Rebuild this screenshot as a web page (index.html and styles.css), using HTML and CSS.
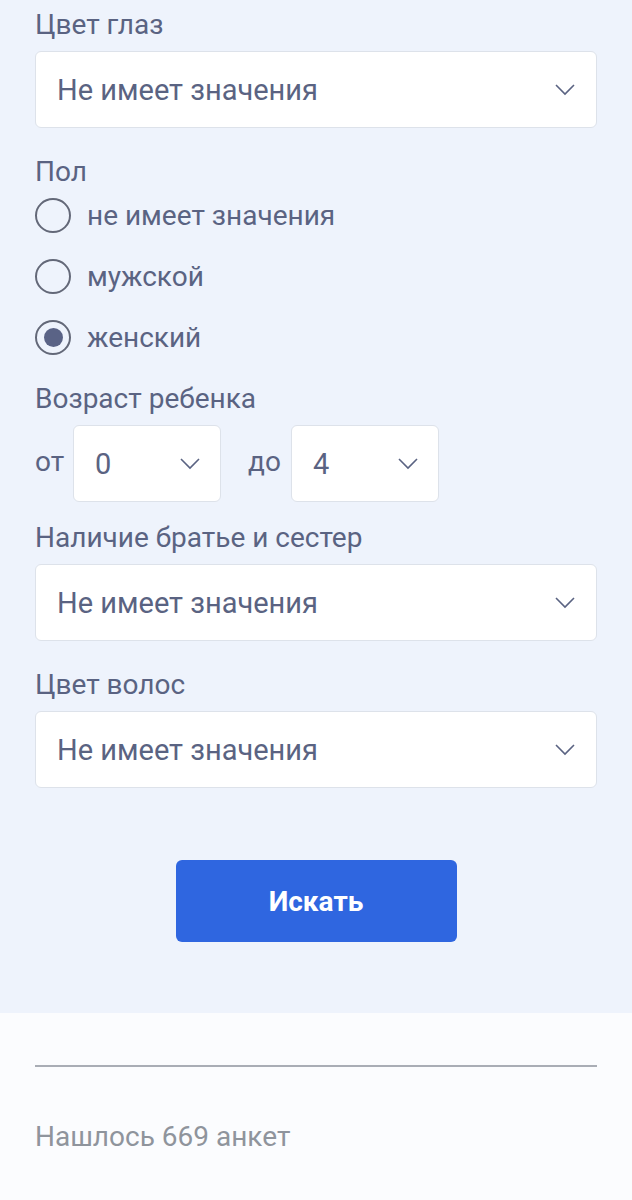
FILE: index.html
```html
<!DOCTYPE html>
<html lang="ru">
<head>
    <meta charset="UTF-8">
    <meta name="viewport" content="width=device-width, initial-scale=1.0">
    <title>Поиск анкет</title>
    <link rel="stylesheet" href="styles.css">
</head>
<body>
    <form class="filters">
        <div class="field">
            <div class="label">Цвет глаз</div>
            <div class="select">
                <span>Не имеет значения</span>
                <svg class="chevron" viewBox="0 0 20 12"><path d="M1 1l9 9 9-9"/></svg>
            </div>
        </div>

        <div class="field">
            <div class="label">Пол</div>
            <div class="radios">
                <label class="radio"><span class="circle"></span>не имеет значения</label>
                <label class="radio"><span class="circle"></span>мужской</label>
                <label class="radio checked"><span class="circle"></span>женский</label>
            </div>
        </div>

        <div class="field age">
            <div class="label">Возраст ребенка</div>
            <div class="range">
                <span class="range-word">от</span>
                <div class="select small">
                    <span>0</span>
                    <svg class="chevron" viewBox="0 0 20 12"><path d="M1 1l9 9 9-9"/></svg>
                </div>
                <span class="range-word to">до</span>
                <div class="select small">
                    <span>4</span>
                    <svg class="chevron" viewBox="0 0 20 12"><path d="M1 1l9 9 9-9"/></svg>
                </div>
            </div>
        </div>

        <div class="field">
            <div class="label">Наличие братье и сестер</div>
            <div class="select">
                <span>Не имеет значения</span>
                <svg class="chevron" viewBox="0 0 20 12"><path d="M1 1l9 9 9-9"/></svg>
            </div>
        </div>

        <div class="field">
            <div class="label">Цвет волос</div>
            <div class="select">
                <span>Не имеет значения</span>
                <svg class="chevron" viewBox="0 0 20 12"><path d="M1 1l9 9 9-9"/></svg>
            </div>
        </div>

        <div class="actions">
            <button type="button" class="search-btn">Искать</button>
        </div>
    </form>

    <div class="results">
        <hr class="divider">
        <p class="count">Нашлось 669 анкет</p>
    </div>
</body>
</html>
```

FILE: styles.css
```css
body {
    margin: 0;
    font-family: Roboto, "Noto Sans", sans-serif;
    color: #5a6382;
    background-color: #fbfcfe;
}

.filters {
    display: flex;
    flex-direction: column;
    background-color: #eef3fc;
    padding: 11px 35px 71px;
}

.field {
    margin-bottom: 30px;
}

.field.age {
    margin-bottom: 22px;
}

.label {
    font-size: 28px;
    line-height: 28px;
    margin-bottom: 12px;
}

.select {
    display: flex;
    align-items: center;
    justify-content: space-between;
    height: 77px;
    box-sizing: border-box;
    padding: 0 21px 0 21px;
    background-color: #fff;
    border: 1.5px solid #dde2ea;
    border-radius: 6px;
    font-size: 29px;
}

.chevron {
    width: 20px;
    height: 12px;
    fill: none;
    stroke: #5a6382;
    stroke-width: 1.6;
}

.radios {
    display: flex;
    flex-direction: column;
    gap: 26px;
    margin-top: 2px;
}

.radio {
    display: flex;
    align-items: center;
    gap: 16px;
    font-size: 28px;
    height: 35px;
}

.circle {
    width: 36px;
    height: 35px;
    box-sizing: border-box;
    border: 2px solid #636878;
    border-radius: 50%;
    display: flex;
    align-items: center;
    justify-content: center;
}

.radio.checked .circle::after {
    content: '';
    width: 19px;
    height: 19px;
    border-radius: 50%;
    background-color: #5a6386;
}

.range {
    display: flex;
    align-items: center;
}

.range-word {
    font-size: 28px;
    width: 38px;
    margin-top: -4px;
}

.range-word.to {
    width: 43px;
    margin-left: 27px;
}

.select.small {
    width: 148px;
    padding: 0 20px 0 21px;
}

.actions {
    display: flex;
    justify-content: center;
    margin-top: 42px;
}

.search-btn {
    width: 281px;
    height: 82px;
    border: none;
    border-radius: 6px;
    background-color: #2f66e0;
    color: #fff;
    font-family: inherit;
    font-size: 28px;
    font-weight: 700;
}

.results {
    padding: 52px 35px 40px;
}

.divider {
    margin: 0;
    border: none;
    border-top: 2px solid #a9adb5;
}

.count {
    margin: 53px 0 0;
    font-size: 28px;
    line-height: 34px;
    color: #8f949c;
}
```
